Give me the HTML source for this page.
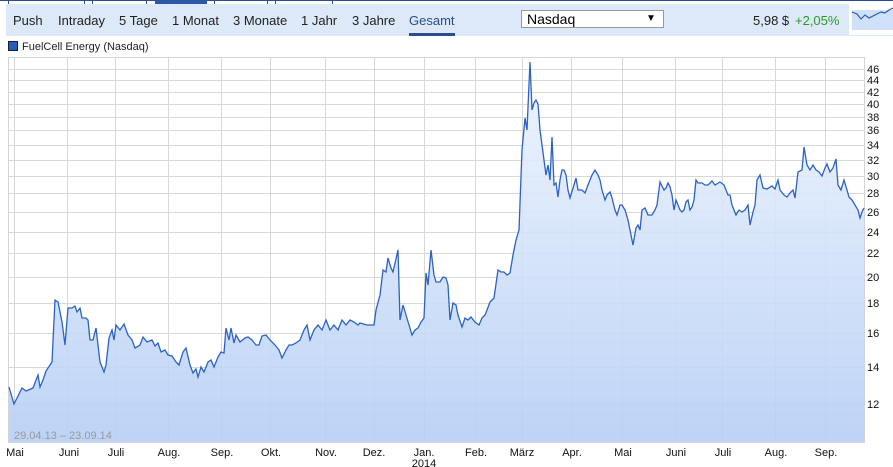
<!DOCTYPE html><html><head><style>
body{margin:0;width:893px;height:467px;overflow:hidden;background:#fff;font-family:"Liberation Sans",sans-serif;position:relative}
.top{position:absolute;left:0;top:0;width:893px;height:4px;border-top:1px solid #2a4d8f;box-sizing:border-box}
.sep{position:absolute;top:0;width:1px;height:4px;background:#2a4d8f}
.hdr{position:absolute;left:6px;top:4px;width:887px;height:32px;background:#dde8f8}
.hdr span{position:absolute;top:9px;font-size:13px;color:#222}
.sel{position:absolute;left:521px;top:9px;width:143px;height:18px;background:#fff;border:1px solid #999;box-sizing:border-box;font-size:14px;padding-left:5px;line-height:16px}
.leg{position:absolute;left:8px;top:41px;font-size:11px;color:#222}
.leg i{display:inline-block;width:8px;height:8px;background:#2a5db8;border:1px solid #123;margin-right:4px;vertical-align:-1px}
</style></head><body>
<div class="top"></div>
<div class="sep" style="left:8px"></div><div class="sep" style="left:84px"></div><div class="sep" style="left:92px"></div><div class="sep" style="left:146px"></div><div class="sep" style="left:214px"></div><div class="sep" style="left:267px"></div><div class="sep" style="left:275px"></div><div class="sep" style="left:332px"></div>
<div style="position:absolute;left:155px;top:0;width:52px;height:4px;background:#2a5aa5"></div>
<div class="hdr">
<span style="left:7px">Push</span><span style="left:52px">Intraday</span><span style="left:113px">5 Tage</span><span style="left:166px">1 Monat</span><span style="left:227px">3 Monate</span><span style="left:295px">1 Jahr</span><span style="left:346px">3 Jahre</span><span style="left:403px;color:#2a4d8f">Gesamt</span>
<div style="position:absolute;left:403px;top:29px;width:46px;height:3px;background:#2a4d8f"></div>
<div class="sel" style="left:515px;top:6px">Nasdaq<span style="left:124px;top:0;font-size:10px;color:#000">▼</span></div>
<span style="left:747px">5,98 $</span><span style="left:789px;color:#2a9a2a">+2,05%</span>
<div style="position:absolute;left:843px;top:0;width:44px;height:31px;background:#fff"><svg width="44" height="31"><rect x="3" y="6" width="41" height="20" fill="#cfe0f8"/><polyline points="3,8 8,10 12,15 16,11 20,14 24,12 28,10 32,8 36,9 40,6 44,4" fill="none" stroke="#2a5db8" stroke-width="1.2"/></svg></div>
</div>
<div class="leg"><i></i>FuelCell Energy (Nasdaq)</div>
<svg style="position:absolute;left:0;top:0" width="893" height="467">
<defs><linearGradient id="g" x1="0" y1="0" x2="0" y2="1"><stop offset="0" stop-color="#eef4fe"/><stop offset="1" stop-color="#b6cff5"/></linearGradient></defs>
<rect x="8.5" y="57.5" width="856" height="385" fill="none" stroke="#d4d4d4"/>
<g stroke="#d8d8d8" stroke-width="1">
<path d="M14.5 58V443M67.5 58V443M115.5 58V443M168.5 58V443M221.5 58V443M270.5 58V443M325.5 58V443M374.5 58V443M424.5 58V443M475.5 58V443M522.5 58V443M571.5 58V443M622.5 58V443M675.5 58V443M722.5 58V443M775.5 58V443M825.5 58V443"/>
<path d="M9 69.5H864M9 80.5H864M9 92.5H864M9 104.5H864M9 117.5H864M9 130.5H864M9 145.5H864M9 160.5H864M9 176.5H864M9 193.5H864M9 212.5H864M9 232.5H864M9 253.5H864M9 277.5H864M9 303.5H864M9 333.5H864M9 367.5H864M9 404.5H864"/>
</g>
<polygon fill="url(#g)" opacity="0.9" points="9,387 14,404 22,388 26,391 33,388 38,375 40,387 43,380 46,371 52,362 55,300 58,302 62,322 65,345 68,308 72,308 75,306 77,312 80,308 82,318 86,318 88,320 90,340 93,340 96,328 100,362 104,372 106,365 109,338 112,330 114,340 116,325 120,330 124,324 128,335 132,340 135,348 140,345 143,337 147,342 152,340 155,346 158,343 161,352 165,350 168,355 172,356 176,362 179,365 183,352 186,348 190,365 193,373 196,369 198,377 201,367 204,372 208,362 211,360 214,367 218,357 221,352 224,353 226,328 229,340 231,328 234,343 236,335 240,342 245,338 248,337 252,340 256,345 259,345 262,336 266,335 270,340 275,345 279,350 282,358 286,350 289,345 292,345 296,343 300,340 304,330 307,325 310,340 314,330 318,325 322,330 326,320 330,330 334,325 338,330 342,320 346,325 350,320 354,322 358,325 360,323 367,325 374,325 376,310 380,295 383,270 386,272 388,258 391,268 393,272 398,250 400,320 403,305 406,315 409,325 412,335 415,330 418,328 421,322 424,318 426,273 428,285 431,250 434,275 436,282 440,282 443,277 446,278 448,285 450,320 453,303 456,305 458,315 462,327 465,318 468,320 471,317 475,322 479,325 482,318 485,315 487,310 490,302 494,298 498,270 501,272 504,272 507,275 510,273 513,255 516,240 519,230 522,150 525,118 527,130 530,62 532,110 534,103 536,100 538,104 540,130 542,145 544,160 546,175 548,165 550,180 552,137 554,185 556,183 558,197 560,180 562,170 564,170 566,175 568,190 570,198 574,185 576,178 578,190 582,190 585,193 588,185 592,175 595,170 598,175 600,180 602,190 605,200 607,195 610,192 612,198 615,210 617,215 620,205 622,205 625,210 628,220 630,230 633,245 636,228 638,225 640,230 642,210 645,208 648,215 652,215 655,210 657,205 660,182 664,190 666,188 668,183 670,187 672,195 674,210 676,200 678,205 680,210 682,212 684,210 686,202 688,200 690,210 692,207 694,200 696,180 698,183 702,183 705,185 708,185 712,181 715,185 720,182 724,185 728,195 730,195 732,205 736,215 739,210 742,212 745,210 748,205 750,225 753,212 755,205 757,180 760,175 763,188 767,189 772,186 775,189 778,180 780,190 784,195 787,197 790,193 793,190 795,198 798,172 802,170 804,147 807,165 810,170 813,165 816,170 819,172 822,176 825,168 827,164 830,172 833,168 836,159 838,185 841,190 844,180 847,190 849,197 852,200 855,205 858,210 860,218 862,212 864,208 864,442 9,442"/>
<polyline fill="none" stroke="#2c62c4" stroke-width="1.3" points="9,387 14,404 22,388 26,391 33,388 38,375 40,387 43,380 46,371 52,362 55,300 58,302 62,322 65,345 68,308 72,308 75,306 77,312 80,308 82,318 86,318 88,320 90,340 93,340 96,328 100,362 104,372 106,365 109,338 112,330 114,340 116,325 120,330 124,324 128,335 132,340 135,348 140,345 143,337 147,342 152,340 155,346 158,343 161,352 165,350 168,355 172,356 176,362 179,365 183,352 186,348 190,365 193,373 196,369 198,377 201,367 204,372 208,362 211,360 214,367 218,357 221,352 224,353 226,328 229,340 231,328 234,343 236,335 240,342 245,338 248,337 252,340 256,345 259,345 262,336 266,335 270,340 275,345 279,350 282,358 286,350 289,345 292,345 296,343 300,340 304,330 307,325 310,340 314,330 318,325 322,330 326,320 330,330 334,325 338,330 342,320 346,325 350,320 354,322 358,325 360,323 367,325 374,325 376,310 380,295 383,270 386,272 388,258 391,268 393,272 398,250 400,320 403,305 406,315 409,325 412,335 415,330 418,328 421,322 424,318 426,273 428,285 431,250 434,275 436,282 440,282 443,277 446,278 448,285 450,320 453,303 456,305 458,315 462,327 465,318 468,320 471,317 475,322 479,325 482,318 485,315 487,310 490,302 494,298 498,270 501,272 504,272 507,275 510,273 513,255 516,240 519,230 522,150 525,118 527,130 530,62 532,110 534,103 536,100 538,104 540,130 542,145 544,160 546,175 548,165 550,180 552,137 554,185 556,183 558,197 560,180 562,170 564,170 566,175 568,190 570,198 574,185 576,178 578,190 582,190 585,193 588,185 592,175 595,170 598,175 600,180 602,190 605,200 607,195 610,192 612,198 615,210 617,215 620,205 622,205 625,210 628,220 630,230 633,245 636,228 638,225 640,230 642,210 645,208 648,215 652,215 655,210 657,205 660,182 664,190 666,188 668,183 670,187 672,195 674,210 676,200 678,205 680,210 682,212 684,210 686,202 688,200 690,210 692,207 694,200 696,180 698,183 702,183 705,185 708,185 712,181 715,185 720,182 724,185 728,195 730,195 732,205 736,215 739,210 742,212 745,210 748,205 750,225 753,212 755,205 757,180 760,175 763,188 767,189 772,186 775,189 778,180 780,190 784,195 787,197 790,193 793,190 795,198 798,172 802,170 804,147 807,165 810,170 813,165 816,170 819,172 822,176 825,168 827,164 830,172 833,168 836,159 838,185 841,190 844,180 847,190 849,197 852,200 855,205 858,210 860,218 862,212 864,208"/>
<g font-size="11" fill="#111" font-family="Liberation Sans,sans-serif">
<text x="867" y="73">46</text><text x="867" y="84">44</text><text x="867" y="96">42</text><text x="867" y="108">40</text><text x="867" y="121">38</text><text x="867" y="134">36</text><text x="867" y="149">34</text><text x="867" y="164">32</text><text x="867" y="180">30</text><text x="867" y="197">28</text><text x="867" y="216">26</text><text x="867" y="236">24</text><text x="867" y="257">22</text><text x="867" y="281">20</text><text x="867" y="307">18</text><text x="867" y="337">16</text><text x="867" y="371">14</text><text x="867" y="408">12</text>
<g text-anchor="middle"><text x="15" y="456">Mai</text><text x="69" y="456">Juni</text><text x="116" y="456">Juli</text><text x="169" y="456">Aug.</text><text x="222" y="456">Sep.</text><text x="271" y="456">Okt.</text><text x="326" y="456">Nov.</text><text x="374" y="456">Dez.</text><text x="424" y="456">Jan.</text><text x="424" y="467">2014</text><text x="476" y="456">Feb.</text><text x="522" y="456">März</text><text x="572" y="456">Apr.</text><text x="623" y="456">Mai</text><text x="676" y="456">Juni</text><text x="723" y="456">Juli</text><text x="776" y="456">Aug.</text><text x="826" y="456">Sep.</text></g>
<text x="14" y="439" fill="#999">29.04.13 – 23.09.14</text>
</g>
</svg>
</body></html>
